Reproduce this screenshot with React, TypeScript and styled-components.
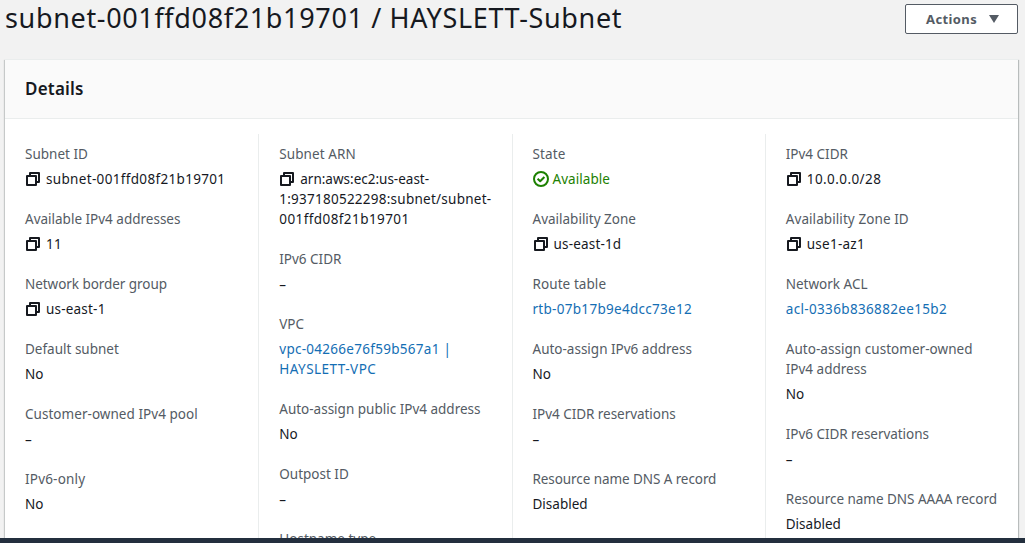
import React from "react";
import styled, { createGlobalStyle } from "styled-components";

const GlobalStyle = createGlobalStyle`
  * { box-sizing: border-box; }
  body { margin: 0; background: #f2f2f2; overflow: hidden; }
`;

const Page = styled.div`
  display: flex;
  flex-direction: column;
  width: 1025px;
  height: 543px;
  overflow: hidden;
  background: #f2f2f2;
  color: #16191f;
  font-family: "Noto Sans", "Open Sans", sans-serif;
  font-size: 13.5px;
  line-height: 20px;
`;

const TitleBar = styled.header`
  display: flex;
  flex: none;
  justify-content: space-between;
  align-items: flex-start;
  height: 60px;
  padding: 4px 7px 0 5px;
`;

const Title = styled.h1`
  margin: -4px 0 0;
  font-size: 27px;
  font-weight: 400;
  line-height: 36px;
  white-space: nowrap;
  letter-spacing: 0.65px;
`;

const ActionsButton = styled.button`
  display: flex;
  align-items: center;
  gap: 12px;
  width: 113px;
  height: 30px;
  padding: 0 0 0 20px;
  border: 1px solid #545b64;
  border-radius: 2px;
  background: #fff;
  color: #545b64;
  font: 700 13px/20px "Noto Sans", sans-serif;
  letter-spacing: 0.4px;
`;

const Card = styled.section`
  display: flex;
  flex: 1;
  flex-direction: column;
  min-height: 0;
  margin: 0 7px 0 5px;
  background: #fff;
  box-shadow: 0 -1px 0 #eaeded, 1px 0 1px #b8bcbc, -1px 0 1px #c6c9c9;
`;

const CardHeader = styled.div`
  flex: none;
  height: 59px;
  padding: 18px 20px 0;
  border-bottom: 1px solid #eaeded;
  background: #fafafa;
`;

const CardTitle = styled.h2`
  margin: 0;
  font-size: 17px;
  font-weight: 600;
  line-height: 22px;
  letter-spacing: 0.2px;
`;

const Columns = styled.div`
  display: grid;
  flex: 1;
  grid-template-columns: repeat(4, 1fr);
  min-height: 0;
  padding-top: 15px;
`;

const Column = styled.div`
  display: flex;
  flex-direction: column;
  gap: 20px;
  min-width: 0;
  min-height: 0;
  padding: 10px 0 0 20px;
  overflow: hidden;

  & + & {
    border-left: 1px solid #eaeded;
  }
`;

const Field = styled.div`
  display: flex;
  flex: none;
  flex-direction: column;
  gap: 5px;
`;

const Line = styled.span<{ $track?: number; $drop?: boolean }>`
  display: block;
  height: 20px;
  padding-top: ${(p) => (p.$drop ? 1 : 0)}px;
  white-space: nowrap;
  letter-spacing: ${(p) => p.$track ?? 0}px;
`;

const Label = styled.div`
  color: #545b64;
`;

const Value = styled.div<{ $tone?: Tone }>`
  color: ${(p) => (p.$tone === "link" ? "#146eb4" : p.$tone === "ok" ? "#1d8102" : "#16191f")};
`;

const Glyph = styled.svg<{ $gap: number }>`
  display: inline-block;
  width: 16px;
  height: 16px;
  margin-right: ${(p) => p.$gap}px;
  vertical-align: -3px;
`;

const BottomBar = styled.footer`
  flex: none;
  height: 5px;
  background: #232f3e;
`;

type Tone = "link" | "ok";
type Text = [string, number?];
interface Item {
  label: Text[];
  value: Text[];
  tone?: Tone;
  copy?: boolean;
}

const columns: Item[][] = [
  [
    { label: [["Subnet ID"]], value: [["subnet-001ffd08f21b19701", 0.33]], copy: true },
    { label: [["Available IPv4 addresses"]], value: [["11", 0.4]], copy: true },
    { label: [["Network border group", -0.05]], value: [["us-east-1", 0.2]], copy: true },
    { label: [["Default subnet"]], value: [["No"]] },
    { label: [["Customer-owned IPv4 pool", 0.04]], value: [["–"]] },
    { label: [["IPv6-only", 0.2]], value: [["No"]] },
  ],
  [
    {
      label: [["Subnet ARN", 0.1]],
      value: [
        ["arn:aws:ec2:us-east-"],
        ["1:937180522298:subnet/subnet-", 0.25],
        ["001ffd08f21b19701", 0.42],
      ],
      copy: true,
    },
    { label: [["IPv6 CIDR"]], value: [["–"]] },
    { label: [["VPC"]], value: [["vpc-04266e76f59b567a1 |", 0.28], ["HAYSLETT-VPC", 0.48]], tone: "link" },
    { label: [["Auto-assign public IPv4 address"]], value: [["No"]] },
    { label: [["Outpost ID"]], value: [["–"]] },
    { label: [["Hostname type"]], value: [] },
  ],
  [
    { label: [["State", 0.15]], value: [["Available", 0.05]], tone: "ok" },
    { label: [["Availability Zone"]], value: [["us-east-1d", 0.18]], copy: true },
    { label: [["Route table", 0.08]], value: [["rtb-07b17b9e4dcc73e12", 0.29]], tone: "link" },
    { label: [["Auto-assign IPv6 address"]], value: [["No"]] },
    { label: [["IPv4 CIDR reservations", -0.04]], value: [["–"]] },
    { label: [["Resource name DNS A record", -0.08]], value: [["Disabled"]] },
  ],
  [
    { label: [["IPv4 CIDR"]], value: [["10.0.0.0/28", 0.42]], copy: true },
    { label: [["Availability Zone ID", 0.08]], value: [["use1-az1", 0.25]], copy: true },
    { label: [["Network ACL"]], value: [["acl-0336b836882ee15b2", 0.34]], tone: "link" },
    { label: [["Auto-assign customer-owned", 0.04], ["IPv4 address"]], value: [["No"]] },
    { label: [["IPv6 CIDR reservations", -0.04]], value: [["–"]] },
    { label: [["Resource name DNS AAAA record", -0.02]], value: [["Disabled"]] },
  ],
];

const CopyIcon = () => (
  <Glyph $gap={5} viewBox="0 0 16 16" fill="none" stroke="#16191f" strokeWidth="2" strokeLinejoin="round">
    <path d="M2 5h9v9H2z" />
    <path d="M5 5V2h9v9h-3" />
  </Glyph>
);

const CheckIcon = () => (
  <Glyph $gap={4} viewBox="0 0 16 16" fill="none" stroke="#1d8102" strokeWidth="2" strokeLinejoin="round">
    <circle cx="8" cy="8" r="7" />
    <path d="M4.6 7.8 7.2 10.3 11.4 6" />
  </Glyph>
);

const FieldItem = ({ label, value, tone, copy }: Item) => (
  <Field>
    <Label>
      {label.map(([text, track]) => (
        <Line key={text} $track={track}>{text}</Line>
      ))}
    </Label>
    <Value $tone={tone}>
      {value.map(([text, track], i) => (
        <Line key={text} $track={track} $drop={text === "–"}>
          {i === 0 && copy && <CopyIcon />}
          {i === 0 && tone === "ok" && <CheckIcon />}
          {text}
        </Line>
      ))}
    </Value>
  </Field>
);

export default function App() {
  return (
    <Page>
      <GlobalStyle />
      <TitleBar>
        <Title>subnet-001ffd08f21b19701 / HAYSLETT-Subnet</Title>
        <ActionsButton>
          Actions
          <svg width="10" height="8" viewBox="0 0 10 8">
            <path d="M0 0h10L5 8z" fill="#545b64" />
          </svg>
        </ActionsButton>
      </TitleBar>
      <Card>
        <CardHeader>
          <CardTitle>Details</CardTitle>
        </CardHeader>
        <Columns>
          {columns.map((items, i) => (
            <Column key={i}>
              {items.map((item) => (
                <FieldItem key={item.label[0][0]} {...item} />
              ))}
            </Column>
          ))}
        </Columns>
      </Card>
      <BottomBar />
    </Page>
  );
}
